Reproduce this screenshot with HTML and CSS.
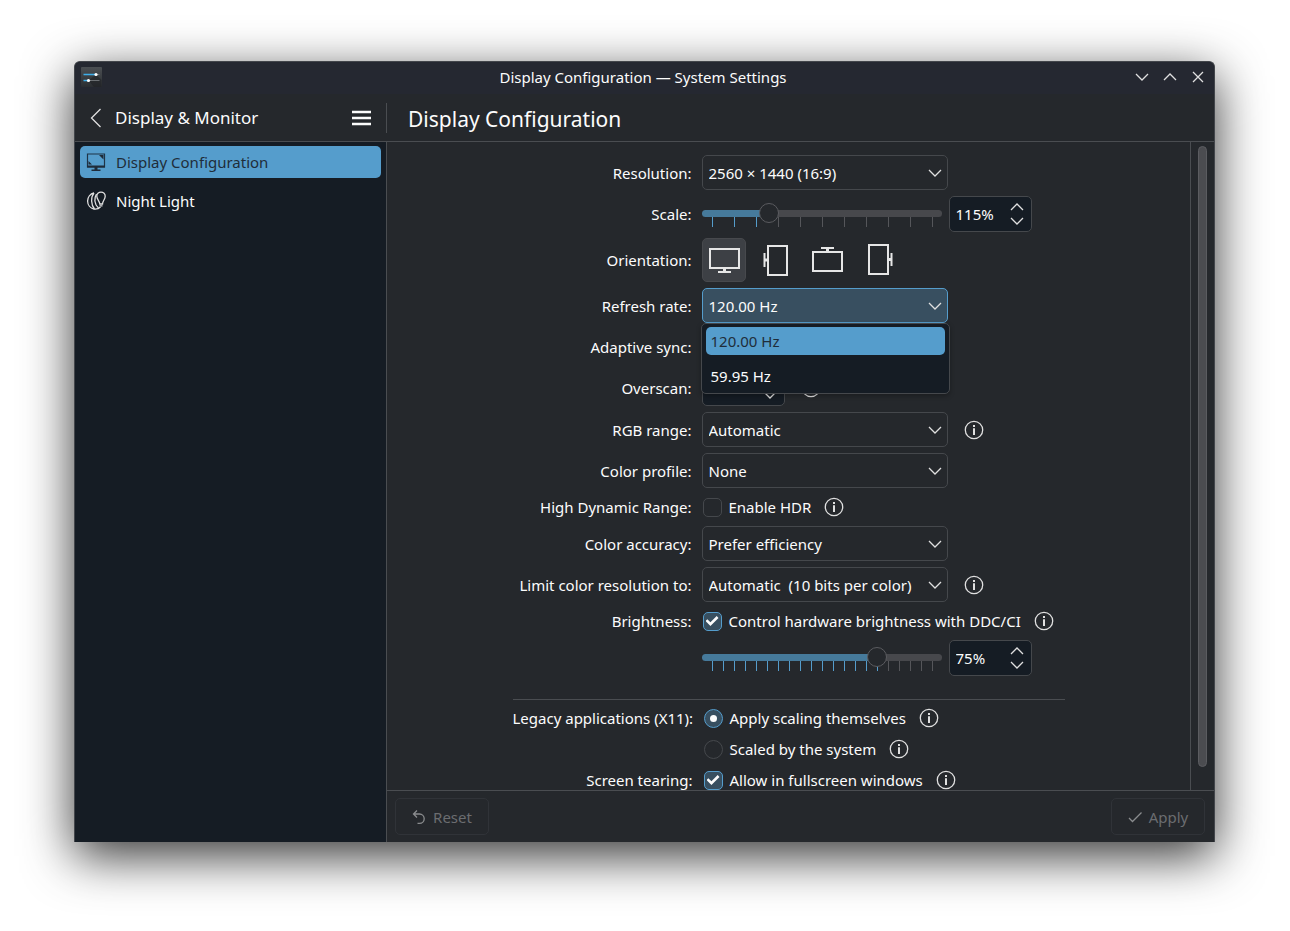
FILE: index.html
```html
<!DOCTYPE html>
<html lang="en">
  <head>
    <meta charset="UTF-8" />
    <meta name="viewport" content="width=device-width, initial-scale=1.0" />
    <title>Display Configuration — System Settings</title>
    <link rel="stylesheet" href="styles.css">
  </head>
  <body>
    <!-- shared icons -->
    <svg class="defs" width="0" height="0" aria-hidden="true">
      <symbol id="down" viewBox="0 0 14 14"><path d="M1 4 L7 10 L13 4" /></symbol>
      <symbol id="up" viewBox="0 0 14 14"><path d="M1 10 L7 4 L13 10" /></symbol>
      <symbol id="info" viewBox="0 0 20 20">
        <circle cx="10" cy="10" r="8.7" />
        <path d="M10 8.3 V15" stroke-width="2" />
        <path d="M10 5 V7" stroke-width="2" />
      </symbol>
    </svg>

    <div class="window">
      <header class="titlebar">
        <svg class="app-icon" width="21" height="20" viewBox="0 0 21 20">
          <defs>
            <linearGradient id="appbg" x1="0" y1="0" x2="0" y2="1">
              <stop offset="0" stop-color="#4b4f53" />
              <stop offset="1" stop-color="#2b2e31" />
            </linearGradient>
          </defs>
          <rect width="21" height="20" rx="1" fill="url(#appbg)" />
          <path d="M15 7.500 L20.500 13 V20 H13 L7.500 13.500 Z" fill="#1f2224" opacity=".6" />
          <path d="M15 7.500 H18.500 M7.500 13.500 H18.500" stroke="#6b6f72" />
          <path d="M2.500 7.500 H15 M2.500 13.500 H7.500" stroke="#3daee9" stroke-width="1.400" />
          <circle cx="15" cy="7.500" r="1.600" fill="#fff" />
          <circle cx="7.500" cy="13.500" r="1.600" fill="#fff" />
        </svg>
        <h1>Display Configuration — System Settings</h1>
        <div class="window-buttons">
          <button aria-label="Minimize"><svg class="line" width="14" height="14"><use href="#down" /></svg></button>
          <button aria-label="Maximize"><svg class="line" width="14" height="14"><use href="#up" /></svg></button>
          <button aria-label="Close"><svg class="line" width="14" height="14" viewBox="0 0 14 14"><path d="M2 2 L12 12 M12 2 L2 12" /></svg></button>
        </div>
      </header>

      <div class="columns">
        <nav class="sidebar">
          <div class="toolbar side-toolbar">
            <button class="back" aria-label="Back">
              <svg class="line" width="12" height="20" viewBox="0 0 12 20"><path d="M10.500 1 L1.500 10 L10.500 19" /></svg>
            </button>
            <span class="side-title">Display &amp; Monitor</span>
            <button class="menu" aria-label="Menu">
              <svg width="19" height="16" viewBox="0 0 19 16"><path d="M0 2 H19 M0 8 H19 M0 14 H19" stroke="#fcfcfc" stroke-width="2.400" /></svg>
            </button>
          </div>
          <ul class="side-list">
            <li>
              <a class="side-item active" href="#">
                <svg width="20" height="20" viewBox="0 0 20 20">
                  <path d="M1.500 2 H18.500 V15 H1.500 Z" fill="none" stroke="#1f3447" stroke-width="1.200" />
                  <path d="M1 13.500 H19 V15.500 H1 Z M8.500 15 H11.500 V17.500 H14.500 V19 H5.500 V17.500 H8.500 Z M13 3 H17.500 V7.500 Z M2.500 9 L6 12.500 H2.500 Z" fill="#1f2c3a" />
                </svg>
                Display Configuration
              </a>
            </li>
            <li>
              <a class="side-item" href="#">
                <svg class="line" width="20" height="20" viewBox="0 0 20 20">
                  <path d="M8 2 A8.200 8.200 0 0 0 8 18 C11 18.300 13.500 17 14.500 16" />
                  <path d="M8 2 C4.500 6 5 14 8.500 18 M10.500 3 C8 7 8 13 12.500 17" />
                  <path d="M13.800 13 C13.800 10 10.800 8.500 10.800 5.300 A4.200 4.200 0 0 1 19.200 5.300 C19.200 8.500 16.500 10 16.500 13 Z M13.500 14.800 H16.500" />
                </svg>
                Night Light
              </a>
            </li>
          </ul>
        </nav>

        <main class="content">
          <div class="toolbar"><h2>Display Configuration</h2></div>

          <div class="scroll-area">
            <div class="page">
              <form class="forms" id="displayForm" action="#">
                <div class="form-grid">
                  <label for="resolution">Resolution:</label>
                  <div class="field">
                    <div class="combo">
                      <select id="resolution"><option>2560 × 1440 (16:9)</option></select>
                      <svg class="line" width="14" height="14"><use href="#down" /></svg>
                    </div>
                  </div>

                  <label for="scale">Scale:</label>
                  <div class="field">
                    <div class="slider" style="--value: 26%">
                      <input type="range" id="scale" min="50" max="300" value="115" />
                      <div class="ticks"></div>
                    </div>
                    <div class="spin">
                      <input type="text" value="115%" aria-label="Scale value" />
                      <div class="steps">
                        <button type="button" aria-label="Increase"><svg class="line" width="14" height="14"><use href="#up" /></svg></button>
                        <button type="button" aria-label="Decrease"><svg class="line" width="14" height="14"><use href="#down" /></svg></button>
                      </div>
                    </div>
                  </div>

                  <span class="label">Orientation:</span>
                  <div class="field orientation">
                    <button type="button" class="active" aria-label="Landscape">
                      <svg width="32" height="32" viewBox="0 0 32 32"><path d="M2 5 H31 V24 H2 Z M10 28 H23" /><path d="M16.500 24 V28" stroke-width="3" /></svg>
                    </button>
                    <button type="button" aria-label="Portrait left">
                      <svg width="32" height="32" viewBox="0 0 32 32"><path d="M8 2 H27 V31 H8 Z M4.500 9 V23" /><path d="M8 16 H4" stroke-width="3" /></svg>
                    </button>
                    <button type="button" aria-label="Landscape flipped">
                      <svg width="32" height="32" viewBox="0 0 32 32"><path d="M1 8 H30 V27 H1 Z M9 4 H22" /><path d="M15.500 8 V4" stroke-width="3" /></svg>
                    </button>
                    <button type="button" aria-label="Portrait right">
                      <svg width="32" height="32" viewBox="0 0 32 32"><path d="M5 1 H24 V30 H5 Z M27.500 9 V22" /><path d="M24 15.500 H28" stroke-width="3" /></svg>
                    </button>
                  </div>

                  <label for="refresh">Refresh rate:</label>
                  <div class="field">
                    <div class="combo open">
                      <select id="refresh"><option>120.00 Hz</option><option>59.95 Hz</option></select>
                      <svg class="line" width="14" height="14"><use href="#down" /></svg>
                      <ul class="popup" role="listbox" aria-label="Refresh rate">
                        <li class="active" role="option" aria-selected="true">120.00 Hz</li>
                        <li role="option" aria-selected="false">59.95 Hz</li>
                      </ul>
                    </div>
                  </div>

                  <label for="sync">Adaptive sync:</label>
                  <div class="field">
                    <div class="combo">
                      <select id="sync"><option>Never</option></select>
                      <svg class="line" width="14" height="14"><use href="#down" /></svg>
                    </div>
                  </div>

                  <label for="overscan">Overscan:</label>
                  <div class="field">
                    <div class="spin">
                      <input type="text" id="overscan" value="0%" />
                      <div class="steps">
                        <button type="button" aria-label="Increase"><svg class="line" width="14" height="14"><use href="#up" /></svg></button>
                        <button type="button" aria-label="Decrease"><svg class="line" width="14" height="14"><use href="#down" /></svg></button>
                      </div>
                    </div>
                    <button type="button" class="info" aria-label="Help"><svg class="line" width="20" height="20"><use href="#info" /></svg></button>
                  </div>

                  <label for="rgb">RGB range:</label>
                  <div class="field">
                    <div class="combo">
                      <select id="rgb"><option>Automatic</option></select>
                      <svg class="line" width="14" height="14"><use href="#down" /></svg>
                    </div>
                    <button type="button" class="info" aria-label="Help"><svg class="line" width="20" height="20"><use href="#info" /></svg></button>
                  </div>

                  <label for="profile">Color profile:</label>
                  <div class="field">
                    <div class="combo">
                      <select id="profile"><option>None</option></select>
                      <svg class="line" width="14" height="14"><use href="#down" /></svg>
                    </div>
                  </div>

                  <span class="label">High Dynamic Range:</span>
                  <div class="field check">
                    <input type="checkbox" id="hdr" /><label for="hdr">Enable HDR</label>
                    <button type="button" class="info" aria-label="Help"><svg class="line" width="20" height="20"><use href="#info" /></svg></button>
                  </div>

                  <label for="accuracy">Color accuracy:</label>
                  <div class="field">
                    <div class="combo">
                      <select id="accuracy"><option>Prefer efficiency</option></select>
                      <svg class="line" width="14" height="14"><use href="#down" /></svg>
                    </div>
                  </div>

                  <label for="bits">Limit color resolution to:</label>
                  <div class="field">
                    <div class="combo">
                      <select id="bits"><option>Automatic &nbsp;(10 bits per color)</option></select>
                      <svg class="line" width="14" height="14"><use href="#down" /></svg>
                    </div>
                    <button type="button" class="info" aria-label="Help"><svg class="line" width="20" height="20"><use href="#info" /></svg></button>
                  </div>

                  <span class="label">Brightness:</span>
                  <div class="field check">
                    <input type="checkbox" id="ddc" checked /><label for="ddc">Control hardware brightness with DDC/CI</label>
                    <button type="button" class="info" aria-label="Help"><svg class="line" width="20" height="20"><use href="#info" /></svg></button>
                  </div>

                  <div class="field second">
                    <div class="slider fine" style="--value: 75%">
                      <input type="range" id="brightness" min="0" max="100" value="75" aria-label="Brightness" />
                      <div class="ticks"></div>
                    </div>
                    <div class="spin">
                      <input type="text" value="75%" aria-label="Brightness value" />
                      <div class="steps">
                        <button type="button" aria-label="Increase"><svg class="line" width="14" height="14"><use href="#up" /></svg></button>
                        <button type="button" aria-label="Decrease"><svg class="line" width="14" height="14"><use href="#down" /></svg></button>
                      </div>
                    </div>
                  </div>
                </div>

                <hr />

                <div class="form-grid tight">
                  <span class="label">Legacy applications (X11):</span>
                  <div class="field check">
                    <input type="radio" name="legacy" id="self" checked /><label for="self">Apply scaling themselves</label>
                    <button type="button" class="info" aria-label="Help"><svg class="line" width="20" height="20"><use href="#info" /></svg></button>
                  </div>
                  <div class="field check second">
                    <input type="radio" name="legacy" id="system" /><label for="system">Scaled by the system</label>
                    <button type="button" class="info" aria-label="Help"><svg class="line" width="20" height="20"><use href="#info" /></svg></button>
                  </div>
                  <span class="label">Screen tearing:</span>
                  <div class="field check">
                    <input type="checkbox" id="tearing" checked /><label for="tearing">Allow in fullscreen windows</label>
                    <button type="button" class="info" aria-label="Help"><svg class="line" width="20" height="20"><use href="#info" /></svg></button>
                  </div>
                </div>
              </form>
            </div>
            <div class="scrollbar"><div class="thumb"></div></div>
          </div>

          <footer class="footer">
            <button type="reset" form="displayForm" disabled>
              <svg class="line" width="14" height="16" viewBox="0 0 14 16"><path d="M5 1.500 L1.500 5 L5 8.500 M1.500 5 H7.500 A4.700 4.700 0 0 1 7.500 14.400 H5.500" /></svg>
              Reset
            </button>
            <button type="submit" form="displayForm" disabled>
              <svg class="line" width="14" height="14" viewBox="0 0 14 14"><path d="M1 8 L4.500 11.500 L13.500 2.500" /></svg>
              Apply
            </button>
          </footer>
        </main>
      </div>
    </div>
  </body>
</html>
```

FILE: styles.css
```css
:root {
  --bg: #25282c;
  --view: #151c24;
  --line: #4a4d51;
  --border: #45484c;
  --text: #fcfcfc;
  --accent: #559dcc;
  --accent-dark: #467a9b;
  --accent-fill: #384f60;
}
* {
  box-sizing: border-box;
}
body {
  margin: 0;
  height: 100vh;
  padding: 61px 75px 89px 74px;
  background: #fff;
  color: var(--text);
  font: 15px/20px "Noto Sans", sans-serif;
}
button, input, select {
  font: inherit;
  color: inherit;
  margin: 0;
}
button {
  display: flex;
  align-items: center;
  justify-content: center;
  padding: 0;
  border: none;
  background: none;
}
ul {
  list-style: none;
  margin: 0;
  padding: 0;
}
h1, h2 {
  margin: 0;
  font-weight: 400;
}
.defs {
  position: absolute;
}
.line {
  fill: none;
  stroke: #e0e0e0;
  stroke-width: 1.3;
  flex: none;
}

/* window frame */
.window {
  display: flex;
  flex-direction: column;
  height: 100%;
  background: var(--bg);
  border: 1px solid #43464b;
  border-bottom: none;
  border-radius: 6px 6px 0 0;
  overflow: hidden;
  box-shadow: 0 14px 50px rgba(0, 0, 0, 0.8);
}
.titlebar {
  display: grid;
  grid-template-columns: 1fr auto 1fr;
  align-items: center;
  height: 32px;
  flex: none;
  padding: 0 9px 2px 6px;
  background: #252831;
}
.titlebar h1 {
  font-size: 15px;
}
.window-buttons {
  display: flex;
  justify-content: flex-end;
  gap: 14px;
}
.columns {
  display: flex;
  flex: 1;
  min-height: 0;
}
.toolbar {
  display: flex;
  align-items: center;
  height: 48px;
  flex: none;
  border-bottom: 1px solid var(--line);
}

/* sidebar */
.sidebar {
  display: flex;
  flex-direction: column;
  width: 312px;
  flex: none;
}
.side-toolbar {
  padding-left: 15px;
}
.side-toolbar::after {
  content: "";
  width: 1px;
  height: 30px;
  margin-left: 15px;
  background: var(--line);
}
.side-title {
  flex: 1;
  margin-left: 13px;
  font-size: 17px;
}
.side-list {
  display: grid;
  align-content: start;
  gap: 7px;
  flex: 1;
  padding: 4px 5px;
  border-right: 1px solid var(--line);
  background: var(--view);
}
.side-item {
  display: flex;
  align-items: center;
  gap: 10px;
  height: 32px;
  padding: 0 6px;
  border-radius: 5px;
  color: var(--text);
  text-decoration: none;
}
.side-item.active {
  background: var(--accent);
  color: #1f2d3a;
}

/* content */
.content {
  display: flex;
  flex-direction: column;
  flex: 1;
  min-width: 0;
}
.content h2 {
  padding: 2px 0 0 21px;
  font-size: 21px;
  line-height: 28px;
}
.scroll-area {
  display: flex;
  flex: 1;
  min-height: 0;
  overflow: hidden;
}
.page {
  flex: 1;
  padding-top: 13px;
}
.scrollbar {
  width: 24px;
  padding: 4px 7px;
  border-left: 1px solid var(--line);
}
.thumb {
  width: 9px;
  height: 97%;
  border: 1px solid #5b5c60;
  border-radius: 5px;
  background: #4b4c50;
}
.forms {
  width: 552px;
  margin: 0 auto;
}
.form-grid {
  display: grid;
  grid-template-columns: 179px 1fr;
  gap: 6px 10px;
  align-items: center;
}
.form-grid.tight {
  grid-template-columns: 180px 1fr;
  row-gap: 5px;
}
.form-grid > label, .label {
  text-align: right;
  white-space: nowrap;
}
.form-grid .second {
  grid-column: 2;
}
.forms hr {
  margin: 23px 0 5px;
  border: none;
  border-top: 1px solid var(--line);
}
.field {
  display: flex;
  align-items: center;
}
.check {
  height: 26px;
}
.check input {
  margin: 0 7px 0 1px;
}
.info {
  margin-left: 16px;
}
.check .info {
  margin-left: 13px;
}

/* combo boxes, the arrow shares the select's grid cell */
.combo {
  position: relative;
  display: grid;
  align-items: center;
  width: 246px;
}
.combo select, .combo > svg {
  grid-area: 1 / 1;
}
.combo > svg {
  justify-self: end;
  margin-right: 6px;
  pointer-events: none;
}
.combo select {
  appearance: none;
  height: 35px;
  padding: 0 6px;
  border: 1px solid var(--border);
  border-radius: 5px;
  background: var(--bg);
}
.combo.open select {
  border-color: var(--accent);
  background: var(--accent-fill);
}
.popup {
  position: absolute;
  z-index: 2;
  top: 100%;
  left: -1px;
  right: -2px;
  display: grid;
  gap: 7px;
  padding: 3px 4px;
  border: 1px solid var(--border);
  border-radius: 5px;
  background: var(--view);
  box-shadow: 0 2px 5px rgba(0, 0, 0, 0.3);
}
.popup li {
  padding: 4px 5px;
  border-radius: 5px;
}
.popup .active {
  background: var(--accent);
  color: #1f2d3a;
}

/* spin boxes */
.spin {
  display: flex;
  width: 83px;
  height: 36px;
  border: 1px solid var(--border);
  border-radius: 5px;
  background: var(--view);
}
.spin input {
  flex: 1;
  min-width: 0;
  padding: 0 0 0 6px;
  border: none;
  background: none;
}
.steps {
  display: grid;
  align-content: center;
  width: 27px;
}

/* sliders */
.slider {
  width: 240px;
  margin: 2px 7px 0 0;
}
.slider input {
  appearance: none;
  position: relative;
  z-index: 1;
  display: block;
  width: 100%;
  height: 20px;
  background: none;
}
.slider input::-webkit-slider-runnable-track {
  height: 7px;
  border-radius: 4px;
  background: linear-gradient(to right, var(--accent-dark) var(--value), #47484c 0);
}
.slider input::-webkit-slider-thumb {
  appearance: none;
  width: 20px;
  height: 20px;
  margin-top: -7px;
  border: 1px solid #5b5c60;
  border-radius: 50%;
  background: var(--bg);
}
.ticks {
  --step: 22px;
  height: 10px;
  margin: -6px 9px 0 10px;
  background: linear-gradient(to right, #55565a 1px, transparent 1px) 0 0 / var(--step) 100%;
}
.ticks::before {
  content: "";
  display: block;
  width: calc(var(--value) + 1px);
  height: 100%;
  background: linear-gradient(to right, var(--accent) 1px, transparent 1px) 0 0 / var(--step) 100%;
}
.fine .ticks {
  --step: 11px;
}

/* orientation buttons */
.orientation {
  gap: 8px;
}
.orientation button {
  width: 44px;
  height: 44px;
  border: 1px solid transparent;
  border-radius: 5px;
}
.orientation .active {
  border-color: #47494d;
  background: #3d4045;
}
.orientation svg {
  fill: none;
  stroke: #e6e6e6;
  stroke-width: 2;
}

/* check boxes and radio buttons */
.check input {
  appearance: none;
  display: grid;
  place-content: center;
  width: 19px;
  height: 19px;
  border: 1px solid var(--border);
  border-radius: 5px;
}
.check input[type="radio"] {
  border-radius: 50%;
}
.check input:checked {
  border-color: var(--accent);
  background: var(--accent-fill);
}
.check input:checked::before {
  content: "";
  width: 13px;
  height: 13px;
  background: var(--text);
  clip-path: polygon(0 50%, 14% 36%, 38% 60%, 86% 12%, 100% 26%, 38% 88%);
}
.check input[type="radio"]:checked::before {
  width: 7px;
  height: 7px;
  border-radius: 50%;
  clip-path: none;
}

/* footer */
.footer {
  display: flex;
  justify-content: space-between;
  flex: none;
  padding: 7px 9px 7px 8px;
  border-top: 1px solid var(--line);
}
.footer button {
  gap: 7px;
  width: 94px;
  height: 37px;
  border: 1px solid #303338;
  border-radius: 5px;
  color: #6b6d70;
}
.footer svg {
  stroke: #8a8c8e;
}
```
